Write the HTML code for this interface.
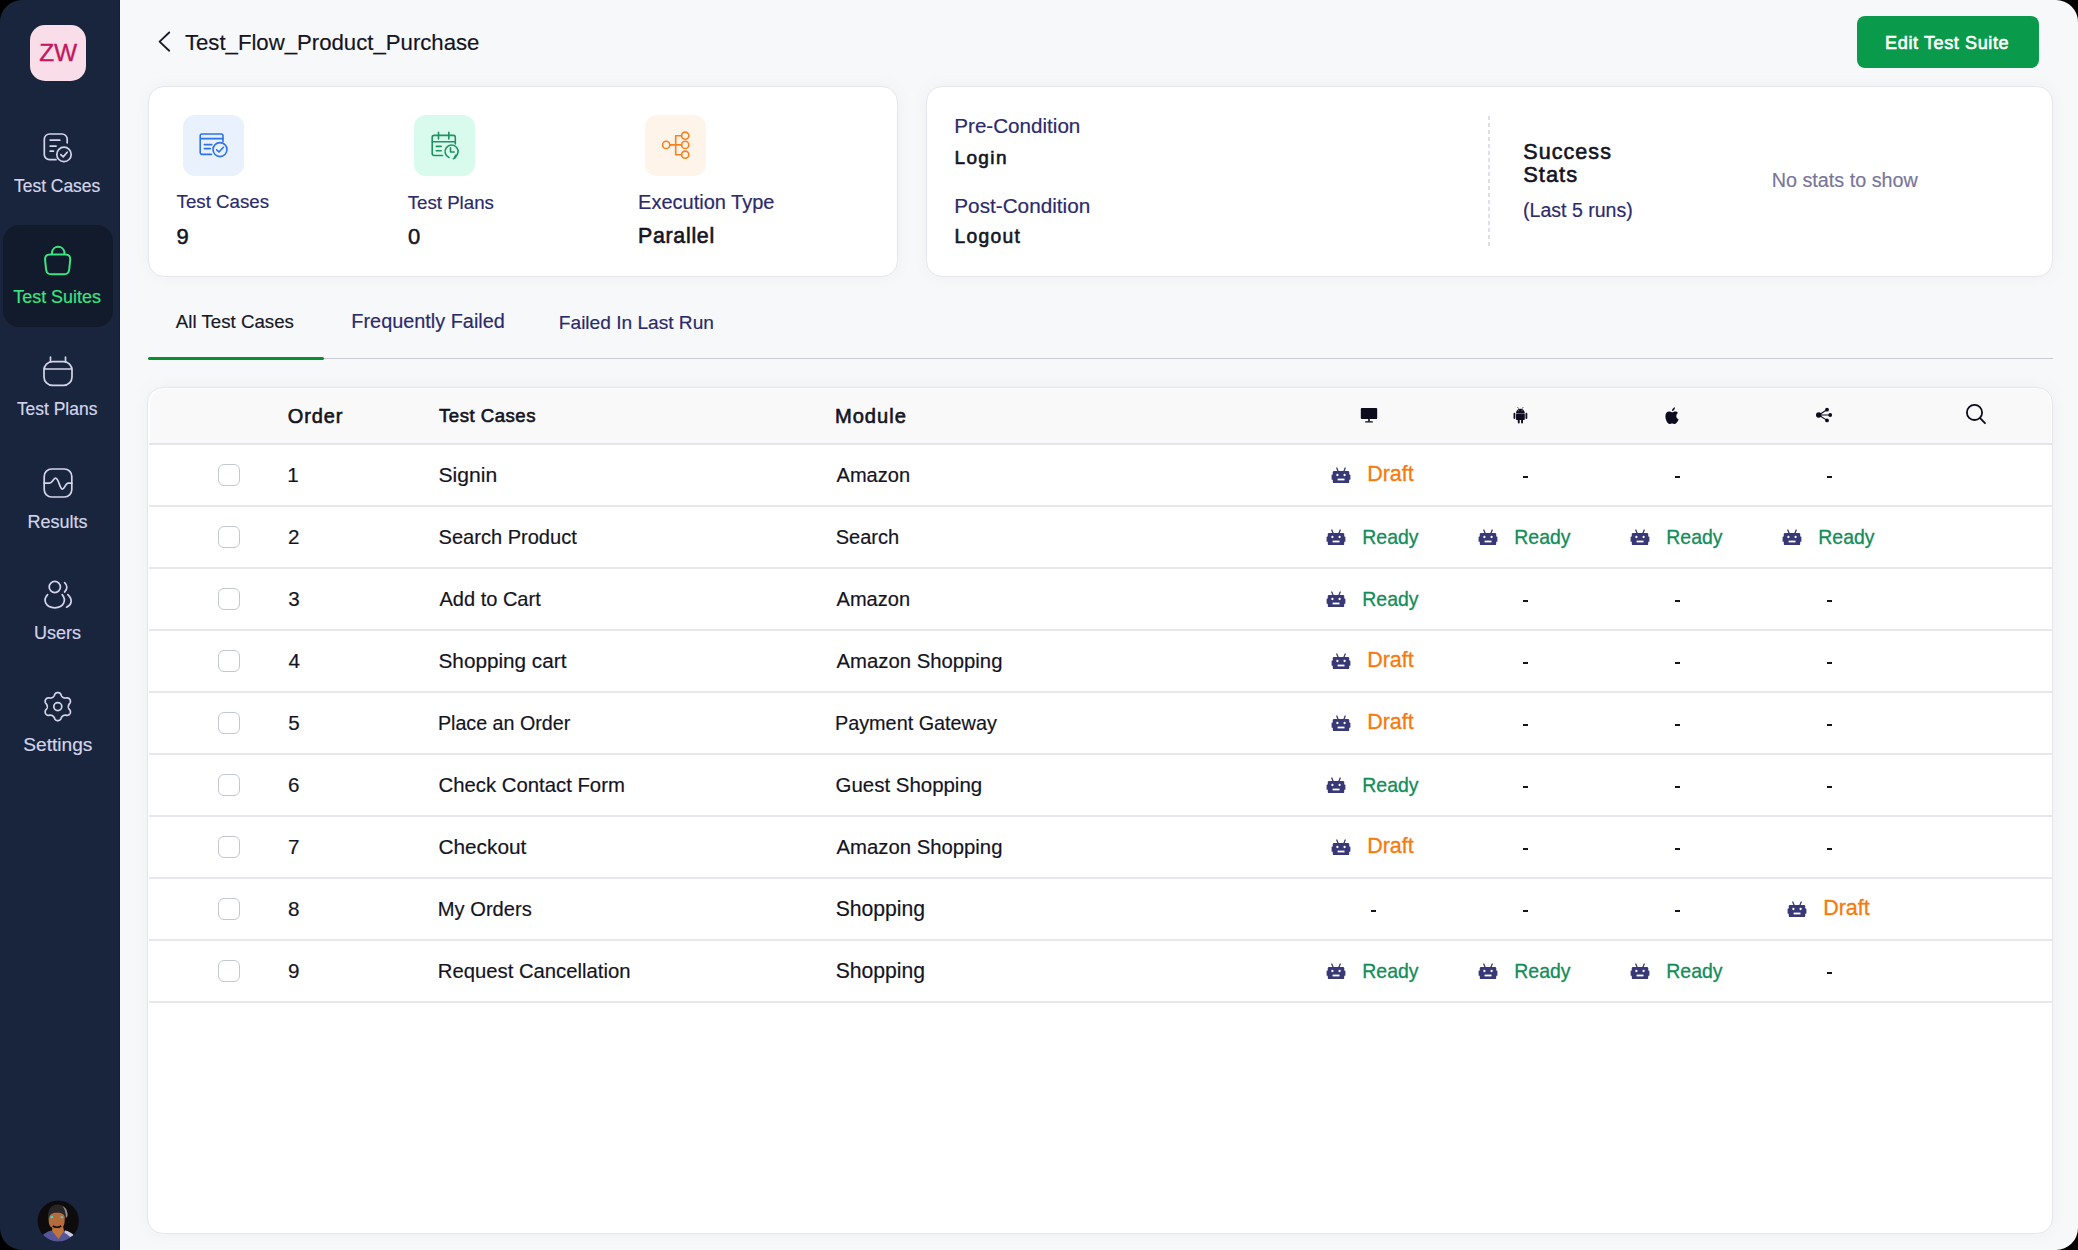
<!DOCTYPE html>
<html><head><meta charset="utf-8"><title>Test Suite</title>
<style>
html,body{margin:0;padding:0;background:#000;}
#screen{position:relative;width:2078px;height:1250px;overflow:hidden;background:#f7f8fa;font-family:"Liberation Sans",sans-serif;}
.t{position:absolute;white-space:nowrap;line-height:1;}
.abs{position:absolute;}
#side{position:absolute;left:0;top:0;width:120px;height:1250px;background:#18253c;box-shadow:inset -1px 0 0 #142036;}
#active{position:absolute;left:3px;top:225px;width:110px;height:102px;border-radius:16px;background:#111b2c;}
#logo{position:absolute;left:30px;top:25px;width:56px;height:56px;border-radius:15px;background:#f9dde8;color:#c2195d;font-size:24.5px;line-height:56px;text-align:center;letter-spacing:-0.3px;-webkit-text-stroke:0.35px #c2195d;}
#btn{position:absolute;left:1857px;top:16px;width:182px;height:52px;border-radius:8px;background:#0a9a4b;}
.card{position:absolute;box-sizing:border-box;background:#fff;border:1.5px solid #e6e7ed;border-radius:16px;box-shadow:0 0 18px rgba(20,25,60,0.04);}
.ibox{position:absolute;width:60.4px;height:60.4px;border-radius:12px;}
.cb{position:absolute;box-sizing:border-box;width:22px;height:22px;border:1.5px solid #c3c7d0;border-radius:6px;background:#fff;}
</style></head>
<body><div id="screen">
<div id="side"></div>
<div id="active"></div>
<div id="logo">ZW</div>
<div class="t" style="left:14.01px;top:178.03px;font-size:17.45px;-webkit-text-stroke:0.18px #d4d5ea;color:#d4d5ea;">Test Cases</div>
<div class="t" style="left:13.30px;top:288.93px;font-size:17.92px;-webkit-text-stroke:0.18px #3be681;color:#3be681;">Test Suites</div>
<div class="t" style="left:16.91px;top:401.13px;font-size:17.45px;-webkit-text-stroke:0.18px #d4d5ea;color:#d4d5ea;">Test Plans</div>
<div class="t" style="left:27.52px;top:512.53px;font-size:18.03px;-webkit-text-stroke:0.18px #d4d5ea;color:#d4d5ea;">Results</div>
<div class="t" style="left:34.11px;top:624.35px;font-size:18.01px;-webkit-text-stroke:0.18px #d4d5ea;color:#d4d5ea;">Users</div>
<div class="t" style="left:23.33px;top:734.70px;font-size:19.14px;-webkit-text-stroke:0.18px #d4d5ea;color:#d4d5ea;">Settings</div>
<svg class="abs" style="left:0;top:0" width="120" height="800" fill="none" stroke="#d4d5ea" stroke-width="1.7" stroke-linecap="round" stroke-linejoin="round">
 <!-- test cases: doc + check -->
 <path d="M56 159.7 H49.5 A5.2 5.2 0 0 1 44.3 154.5 V139.2 A5.2 5.2 0 0 1 49.5 134 H62 A5.2 5.2 0 0 1 67.2 139.2 V142.8"/>
 <path d="M50.2 140.2 H59.8 M50.2 146.1 H56.1 M50.2 151.2 H53.4"/>
 <circle cx="64" cy="154.4" r="7.2"/>
 <path d="M60.8 154.6 L63.2 156.9 L67.2 152.2"/>
 <!-- test plans: calendar -->
 <rect x="44" y="361.6" width="28" height="23.8" rx="8.5"/>
 <path d="M44.2 369 H71.8 M50.5 357 V361.6 M65.5 357 V361.6"/>
 <!-- results -->
 <rect x="44.2" y="469" width="27.6" height="28" rx="7.5"/>
 <path d="M44.2 483.2 H49.5 C52.5 483.2 53.2 478.2 55.6 478.2 C58.5 478.2 60 489.2 62.4 489.2 C64.5 489.2 65.3 483.2 68.3 483.2 H71.8"/>
 <!-- users -->
 <circle cx="54.8" cy="587" r="5.6"/>
 <path d="M47.6 594.6 C42.5 600 45.5 607.8 54.8 607.8 C64.1 607.8 66.6 600 62.2 594.6"/>
 <path d="M64.6 582.6 C67.6 585.2 67.6 589.4 64.6 592"/>
 <path d="M67.8 594.6 C72.5 598.6 72.4 604.6 66.6 607.2"/>
 <!-- settings gear -->
 <circle cx="57.8" cy="706.6" r="4.0"/>
</svg>
<svg class="abs" style="left:0;top:0" width="120" height="800" fill="none" stroke="#d4d5ea" stroke-width="1.7" stroke-linejoin="round"><path d="M57.80 692.55 L58.17 692.57 L58.53 692.63 L58.89 692.73 L59.24 692.87 L59.58 693.04 L59.91 693.26 L60.22 693.52 L60.52 693.82 L60.78 694.18 L60.98 694.72 L61.16 695.26 L61.36 695.63 L61.57 695.95 L61.78 696.24 L61.98 696.50 L62.19 696.74 L62.40 696.96 L62.62 697.15 L62.84 697.32 L63.07 697.46 L63.32 697.59 L63.58 697.70 L63.85 697.79 L64.14 697.87 L64.45 697.93 L64.78 697.98 L65.13 698.01 L65.52 698.03 L65.94 698.02 L66.50 697.90 L67.07 697.80 L67.51 697.86 L67.92 697.96 L68.30 698.10 L68.65 698.28 L68.97 698.48 L69.27 698.72 L69.53 698.98 L69.77 699.27 L69.97 699.58 L70.13 699.90 L70.26 700.25 L70.36 700.61 L70.41 700.98 L70.43 701.37 L70.41 701.76 L70.34 702.16 L70.23 702.56 L70.05 702.97 L69.68 703.42 L69.30 703.84 L69.08 704.20 L68.90 704.54 L68.76 704.86 L68.63 705.17 L68.53 705.47 L68.45 705.76 L68.40 706.04 L68.36 706.32 L68.35 706.60 L68.36 706.88 L68.40 707.16 L68.45 707.44 L68.53 707.73 L68.63 708.03 L68.76 708.34 L68.90 708.66 L69.08 709.00 L69.30 709.36 L69.68 709.78 L70.05 710.23 L70.23 710.64 L70.34 711.04 L70.41 711.44 L70.43 711.83 L70.41 712.22 L70.36 712.59 L70.26 712.95 L70.13 713.30 L69.97 713.62 L69.77 713.93 L69.53 714.22 L69.27 714.48 L68.97 714.72 L68.65 714.92 L68.30 715.10 L67.92 715.24 L67.51 715.34 L67.07 715.40 L66.50 715.30 L65.94 715.18 L65.52 715.17 L65.13 715.19 L64.78 715.22 L64.45 715.27 L64.14 715.33 L63.85 715.41 L63.58 715.50 L63.32 715.61 L63.07 715.74 L62.84 715.88 L62.62 716.05 L62.40 716.24 L62.19 716.46 L61.98 716.70 L61.78 716.96 L61.57 717.25 L61.36 717.57 L61.16 717.94 L60.98 718.48 L60.78 719.02 L60.52 719.38 L60.22 719.68 L59.91 719.94 L59.58 720.16 L59.24 720.33 L58.89 720.47 L58.53 720.57 L58.17 720.63 L57.80 720.65 L57.43 720.63 L57.07 720.57 L56.71 720.47 L56.36 720.33 L56.02 720.16 L55.69 719.94 L55.38 719.68 L55.08 719.38 L54.82 719.02 L54.62 718.48 L54.44 717.94 L54.24 717.57 L54.03 717.25 L53.82 716.96 L53.62 716.70 L53.41 716.46 L53.20 716.24 L52.98 716.05 L52.76 715.88 L52.52 715.74 L52.28 715.61 L52.02 715.50 L51.75 715.41 L51.46 715.33 L51.15 715.27 L50.82 715.22 L50.47 715.19 L50.08 715.17 L49.66 715.18 L49.10 715.30 L48.53 715.40 L48.09 715.34 L47.68 715.24 L47.30 715.10 L46.95 714.92 L46.63 714.72 L46.33 714.48 L46.07 714.22 L45.83 713.93 L45.63 713.62 L45.47 713.30 L45.34 712.95 L45.24 712.59 L45.19 712.22 L45.17 711.83 L45.19 711.44 L45.26 711.04 L45.37 710.64 L45.55 710.23 L45.92 709.78 L46.30 709.36 L46.52 709.00 L46.70 708.66 L46.84 708.34 L46.97 708.03 L47.07 707.73 L47.15 707.44 L47.20 707.16 L47.24 706.88 L47.25 706.60 L47.24 706.32 L47.20 706.04 L47.15 705.76 L47.07 705.47 L46.97 705.17 L46.84 704.86 L46.70 704.54 L46.52 704.20 L46.30 703.84 L45.92 703.42 L45.55 702.97 L45.37 702.56 L45.26 702.16 L45.19 701.76 L45.17 701.37 L45.19 700.98 L45.24 700.61 L45.34 700.25 L45.47 699.90 L45.63 699.58 L45.83 699.27 L46.07 698.98 L46.33 698.72 L46.63 698.48 L46.95 698.28 L47.30 698.10 L47.68 697.96 L48.09 697.86 L48.53 697.80 L49.10 697.90 L49.66 698.02 L50.08 698.03 L50.47 698.01 L50.82 697.98 L51.15 697.93 L51.46 697.87 L51.75 697.79 L52.02 697.70 L52.28 697.59 L52.52 697.46 L52.76 697.32 L52.98 697.15 L53.20 696.96 L53.41 696.74 L53.62 696.50 L53.82 696.24 L54.03 695.95 L54.24 695.63 L54.44 695.26 L54.62 694.72 L54.82 694.18 L55.08 693.82 L55.38 693.52 L55.69 693.26 L56.02 693.04 L56.36 692.87 L56.71 692.73 L57.07 692.63 L57.43 692.57 L57.80 692.55Z"/></svg>
<svg class="abs" style="left:0;top:0" width="120" height="300" fill="none" stroke="#3be681" stroke-width="2" stroke-linecap="round" stroke-linejoin="round">
 <path d="M52 254 V252 A6.3 6.3 0 0 1 64.4 252 V254"/>
 <path d="M50 254.5 H65.3 C69 254.5 70.5 256.5 70.2 260 L69.2 269.5 C68.9 272.5 67 274.3 64 274.3 H51.3 C48.3 274.3 46.4 272.5 46.1 269.5 L45.1 260 C44.8 256.5 46.3 254.5 50 254.5 Z"/>
</svg>
<svg class="abs" style="left:37px;top:1200px" width="42" height="42" viewBox="0 0 42 42">
 <defs><clipPath id="avc"><circle cx="21.2" cy="21" r="20.6"/></clipPath></defs>
 <g clip-path="url(#avc)">
  <rect width="42" height="42" fill="#0e0b0c"/>
  <path d="M2 42 C4 35 8 32.5 14 30.5 L21 34 L28 30.5 C34 32.5 38 35 40 42 Z" fill="#55559a"/>
  <path d="M28 30.5 C32 31.5 35 33 37 35.5 L33 37 C31 35 29.5 33.5 27.5 33 Z" fill="#c9c9e0"/>
  <path d="M15.5 26 L26 26 L27 31 L21.5 39 L15 31 Z" fill="#c0733c"/>
  <path d="M11.4 16.5 C11.4 13 14.5 12 19.5 12 C25 12 27.8 13.5 27.8 17 L27.6 22 C27.4 26.5 24.5 28.8 19.8 28.8 C15 28.8 12 26.5 11.8 22 Z" fill="#b46c3c"/>
  <path d="M11 17 C10.5 9 15 4.5 21 4.6 C27.5 4.8 31 9 30.5 16 L28.5 19 C28 14.5 25.5 12.8 20 12.8 C14.5 12.8 12.5 14.5 12 19 Z" fill="#2a2627"/>
  <path d="M25.5 6 C28.5 7.5 30.8 10.5 30.5 16 L29 18 C29 12.5 27.5 9 25.5 6 Z" fill="#8f8f98"/>
  <rect x="13.4" y="15.9" width="2.6" height="2.2" fill="#3fd6b4"/>
  <rect x="23.6" y="16.2" width="2.4" height="2" fill="#7fb8a8"/>
  <path d="M15.8 26 C18 27.6 22 27.6 24.2 26" stroke="#120c0c" stroke-width="1.6" fill="none"/>
 </g>
</svg>
<svg class="abs" style="left:150px;top:26px" width="30" height="32" fill="none" stroke="#1c1c28" stroke-width="1.9" stroke-linecap="round" stroke-linejoin="round"><path d="M19.2 6.5 L9.6 15.6 L19.2 24.7"/></svg>
<div class="t" style="left:184.90px;top:31.63px;font-size:22.18px;-webkit-text-stroke:0.18px #14141f;color:#14141f;">Test_Flow_Product_Purchase</div>
<div id="btn"></div>
<div class="t" style="left:1885.12px;top:34.11px;font-size:18.06px;color:#fff;-webkit-text-stroke:0.6px #fff;letter-spacing:0.60px;">Edit Test Suite</div>
<div class="card" style="left:147.55px;top:86.25px;width:750.7px;height:190.3px"></div>
<div class="ibox" style="left:183.4px;top:115.3px;background:#e9f1fd"></div>
<div class="ibox" style="left:414.4px;top:115.3px;background:#d8fbee"></div>
<div class="ibox" style="left:645.4px;top:115.3px;background:#fff4ea"></div>
<svg class="abs" style="left:0;top:0" width="900" height="200" fill="none" stroke-linecap="round" stroke-linejoin="round">
 <g stroke="#2f72ea" stroke-width="1.6">
  <path d="M211.5 154.4 H202 A1.8 1.8 0 0 1 200.2 152.6 V135.8 A1.8 1.8 0 0 1 202 134 H221.2 A1.8 1.8 0 0 1 223 135.8 V141.5"/>
  <path d="M200.6 138.6 H222.6 M204.3 144.6 H211.8 M204.3 148.6 H210.3"/>
  <circle cx="220" cy="149.6" r="7"/>
  <path d="M216.7 149.8 L219 152 L223.4 147.3"/>
 </g>
 <g stroke="#1f9262" stroke-width="1.6">
  <path d="M442.5 155.5 H434.2 A2 2 0 0 1 432.2 153.5 V137.4 A2 2 0 0 1 434.2 135.4 H453.3 A2 2 0 0 1 455.3 137.4 V144"/>
  <path d="M432.4 141.8 H455 M438.5 132.4 V139 M448.8 132.4 V139 M436.3 146.4 H441.2 M436.3 150.7 H441.2"/>
  <path d="M449 157.5 A6.5 6.5 0 1 1 454.5 157.3"/>
  <path d="M450.5 147.8 V152 H454.2"/>
  <path d="M453.2 158.8 L455.6 157.6 L455.4 155.2" stroke-width="1.4"/>
 </g>
 <g stroke="#f5821f" stroke-width="1.6">
  <circle cx="666.2" cy="144.9" r="3.6"/>
  <circle cx="685.2" cy="135.7" r="3.6"/>
  <circle cx="685.2" cy="144.9" r="3.6"/>
  <circle cx="685.2" cy="154.7" r="3.6"/>
  <path d="M669.8 144.9 H681.6 M681.6 135.7 H675.7 V154.7 H681.6"/>
 </g>
</svg>
<div class="t" style="left:176.58px;top:193.37px;font-size:18.71px;-webkit-text-stroke:0.18px #2b2a6b;color:#2b2a6b;">Test Cases</div>
<div class="t" style="left:407.68px;top:193.58px;font-size:18.69px;-webkit-text-stroke:0.18px #2b2a6b;color:#2b2a6b;">Test Plans</div>
<div class="t" style="left:638.06px;top:192.47px;font-size:20.00px;-webkit-text-stroke:0.18px #2b2a6b;color:#2b2a6b;">Execution Type</div>
<div class="t" style="left:176.57px;top:225.68px;font-size:22.00px;color:#14141f;-webkit-text-stroke:0.5px #14141f;">9</div>
<div class="t" style="left:407.94px;top:225.68px;font-size:22.00px;color:#14141f;-webkit-text-stroke:0.5px #14141f;">0</div>
<div class="t" style="left:637.95px;top:226.01px;font-size:21.37px;color:#14141f;-webkit-text-stroke:0.6px #14141f;letter-spacing:0.72px;">Parallel</div>
<div class="card" style="left:925.75px;top:86.25px;width:1127px;height:190.3px"></div>
<div class="t" style="left:954.31px;top:116.15px;font-size:20.61px;-webkit-text-stroke:0.18px #2b2a6b;color:#2b2a6b;">Pre-Condition</div>
<div class="t" style="left:954.44px;top:147.90px;font-size:19.02px;color:#14141f;-webkit-text-stroke:0.6px #14141f;letter-spacing:1.39px;">Login</div>
<div class="t" style="left:954.30px;top:195.56px;font-size:20.73px;-webkit-text-stroke:0.18px #2b2a6b;color:#2b2a6b;">Post-Condition</div>
<div class="t" style="left:954.42px;top:227.47px;font-size:19.29px;color:#14141f;-webkit-text-stroke:0.6px #14141f;letter-spacing:1.31px;">Logout</div>
<div class="abs" style="left:1487.5px;top:115.5px;width:2px;height:132px;background:repeating-linear-gradient(to bottom,#dfe0e7 0 4px,transparent 4px 7px)"></div>
<div class="t" style="left:1523.32px;top:141.97px;font-size:21.54px;color:#14141f;-webkit-text-stroke:0.6px #14141f;letter-spacing:1.04px;">Success</div>
<div class="t" style="left:1523.31px;top:163.87px;font-size:21.89px;color:#14141f;-webkit-text-stroke:0.6px #14141f;letter-spacing:0.98px;">Stats</div>
<div class="t" style="left:1523.09px;top:200.55px;font-size:19.55px;-webkit-text-stroke:0.18px #2b2a6b;color:#2b2a6b;">(Last 5 runs)</div>
<div class="t" style="left:1771.68px;top:171.16px;font-size:19.77px;-webkit-text-stroke:0.18px #77769a;color:#77769a;">No stats to show</div>
<div class="t" style="left:175.86px;top:313.36px;font-size:18.71px;-webkit-text-stroke:0.18px #181824;color:#181824;">All Test Cases</div>
<div class="t" style="left:351.37px;top:312.39px;font-size:19.86px;-webkit-text-stroke:0.18px #2b2a6b;color:#2b2a6b;">Frequently Failed</div>
<div class="t" style="left:558.83px;top:313.02px;font-size:19.11px;-webkit-text-stroke:0.18px #2b2a6b;color:#2b2a6b;">Failed In Last Run</div>
<div class="abs" style="left:148px;top:357.6px;width:1905px;height:1.6px;background:#c9cbd3"></div>
<div class="abs" style="left:148px;top:356.5px;width:176px;height:3px;border-radius:2px;background:#098f30"></div>
<div class="card" id="tbl" style="left:147.35px;top:386.75px;width:1905.6px;height:847.5px"></div>
<div class="abs" style="left:149.5px;top:389px;width:1901.5px;height:54px;background:#f9f9fa;border-radius:15px 15px 0 0"></div>
<div class="abs" style="left:148.5px;top:443px;width:1903.5px;height:2px;background:#e5e6eb"></div>
<div class="t" style="left:287.75px;top:406.08px;font-size:19.99px;color:#14141f;-webkit-text-stroke:0.6px #14141f;letter-spacing:0.87px;">Order</div>
<div class="t" style="left:439.08px;top:407.25px;font-size:18.61px;color:#14141f;-webkit-text-stroke:0.6px #14141f;letter-spacing:0.48px;">Test Cases</div>
<div class="t" style="left:834.95px;top:405.96px;font-size:20.13px;color:#14141f;-webkit-text-stroke:0.6px #14141f;letter-spacing:0.99px;">Module</div>
<svg class="abs" style="left:1300px;top:395px" width="720" height="40">
 <g fill="#0c0c1e">
  <rect x="60.8" y="13" width="16.4" height="11" rx="1"/>
  <rect x="68.2" y="23.5" width="1.6" height="3"/>
  <rect x="65" y="26.2" width="8" height="1.4" rx="0.7"/>
 </g>
 <g fill="#0c0c1e">
  <path d="M216 18.2 A4.4 4.4 0 0 1 224.8 18.2 Z"/>
  <rect x="216" y="18.6" width="8.8" height="6.4" rx="0.8"/>
  <rect x="213.5" y="17.8" width="1.8" height="6.2" rx="0.9"/>
  <rect x="225.5" y="17.8" width="1.8" height="6.2" rx="0.9"/>
  <rect x="217.8" y="24" width="1.9" height="4.5" rx="0.9"/>
  <rect x="221.1" y="24" width="1.9" height="4.5" rx="0.9"/>
  <path d="M217.5 12 L218.7 13.8 M223.3 12 L222.1 13.8" stroke="#0c0c1e" stroke-width="0.6"/>
 </g>
 <circle cx="218.8" cy="15.7" r="0.45" fill="#fff"/><circle cx="222" cy="15.7" r="0.45" fill="#fff"/>
 <g fill="#0c0c1e">
  <g transform="translate(365.4 12)">
  <path d="M6.6 4.1 C6.5 2.2 7.8 0.6 9.6 0.2 C9.7 2.1 8.4 3.8 6.6 4.1 Z"/>
  <path d="M6.6 5.3 C5.6 5.3 4.8 4.6 3.6 4.6 C1.6 4.6 0 6.4 0 9.2 C0 12.6 2.2 17 4.1 17 C5.1 17 5.6 16.4 6.7 16.4 C7.8 16.4 8.2 17 9.3 17 C11 17 12.5 14.3 13.2 12.6 C11.6 11.9 10.9 10.6 10.9 9.1 C10.9 7.8 11.6 6.6 12.6 5.9 C11.9 5 10.8 4.5 9.7 4.5 C8.5 4.5 7.6 5.3 6.6 5.3 Z"/>
  </g>
 </g>
 <g fill="#0c0c1e" stroke="#0c0c1e">
  <path d="M518.7 20 L527 14.7 M518.7 20 H530.2 M518.7 20 L527 25.4" stroke-width="1.1"/>
  <circle cx="518.7" cy="20" r="2.7" stroke="none"/>
  <circle cx="527" cy="14.7" r="1.9" stroke="none"/>
  <circle cx="530.2" cy="20" r="1.9" stroke="none"/>
  <circle cx="527" cy="25.4" r="1.9" stroke="none"/>
 </g>
 <g fill="none" stroke="#0c0c1e" stroke-width="1.8" stroke-linecap="round">
  <circle cx="674.5" cy="17.4" r="7.6"/>
  <path d="M680.3 23.4 L685 28.2"/>
 </g>
</svg>
<div class="abs" style="left:148.5px;top:505.0px;width:1903.5px;height:2px;background:#e7e7ed"></div>
<div class="cb" style="left:218px;top:464.3px"></div>
<div class="t" style="left:287.13px;top:464.86px;font-size:20.60px;-webkit-text-stroke:0.18px #14141f;color:#14141f;">1</div>
<div class="t" style="left:438.54px;top:464.45px;font-size:21.09px;-webkit-text-stroke:0.18px #14141f;color:#14141f;">Signin</div>
<div class="t" style="left:836.56px;top:465.33px;font-size:20.05px;-webkit-text-stroke:0.18px #14141f;color:#14141f;">Amazon</div>
<svg class="abs" style="left:1330.60px;top:467.10px" width="20" height="17" viewBox="0 0 20 17">
<path d="M5.8 1 L7.2 4.4 M14.2 1 L12.8 4.4" stroke="#393877" stroke-width="1.3" stroke-linecap="round"/>
<rect x="1.8" y="4" width="16.4" height="12.1" rx="1.2" fill="#393877"/>
<rect x="0.6" y="7.4" width="18.8" height="5.4" rx="0.6" fill="#393877"/>
<circle cx="6.4" cy="8" r="1.15" fill="#fff"/><circle cx="13.6" cy="8" r="1.15" fill="#fff"/>
<rect x="6.6" y="11.6" width="6.9" height="1.8" fill="#fff"/>
</svg>
<div class="t" style="left:1367.14px;top:464.13px;font-size:21.47px;color:#f47b10;-webkit-text-stroke:0.3px #f47b10;">Draft</div>
<div class="abs" style="left:1522.8px;top:475.5px;width:5.6px;height:2px;background:#15151f"></div>
<div class="abs" style="left:1674.8px;top:475.5px;width:5.6px;height:2px;background:#15151f"></div>
<div class="abs" style="left:1826.8px;top:475.5px;width:5.6px;height:2px;background:#15151f"></div>
<div class="abs" style="left:148.5px;top:567.0px;width:1903.5px;height:2px;background:#e7e7ed"></div>
<div class="cb" style="left:218px;top:526.3px"></div>
<div class="t" style="left:287.96px;top:526.86px;font-size:20.60px;-webkit-text-stroke:0.18px #14141f;color:#14141f;">2</div>
<div class="t" style="left:438.59px;top:527.32px;font-size:20.06px;-webkit-text-stroke:0.18px #14141f;color:#14141f;">Search Product</div>
<div class="t" style="left:835.69px;top:527.36px;font-size:20.01px;-webkit-text-stroke:0.18px #14141f;color:#14141f;">Search</div>
<svg class="abs" style="left:1325.60px;top:529.10px" width="20" height="17" viewBox="0 0 20 17">
<path d="M5.8 1 L7.2 4.4 M14.2 1 L12.8 4.4" stroke="#393877" stroke-width="1.3" stroke-linecap="round"/>
<rect x="1.8" y="4" width="16.4" height="12.1" rx="1.2" fill="#393877"/>
<rect x="0.6" y="7.4" width="18.8" height="5.4" rx="0.6" fill="#393877"/>
<circle cx="6.4" cy="8" r="1.15" fill="#fff"/><circle cx="13.6" cy="8" r="1.15" fill="#fff"/>
<rect x="6.6" y="11.6" width="6.9" height="1.8" fill="#fff"/>
</svg>
<div class="t" style="left:1362.30px;top:527.83px;font-size:19.45px;color:#128d59;-webkit-text-stroke:0.3px #128d59;">Ready</div>
<svg class="abs" style="left:1477.60px;top:529.10px" width="20" height="17" viewBox="0 0 20 17">
<path d="M5.8 1 L7.2 4.4 M14.2 1 L12.8 4.4" stroke="#393877" stroke-width="1.3" stroke-linecap="round"/>
<rect x="1.8" y="4" width="16.4" height="12.1" rx="1.2" fill="#393877"/>
<rect x="0.6" y="7.4" width="18.8" height="5.4" rx="0.6" fill="#393877"/>
<circle cx="6.4" cy="8" r="1.15" fill="#fff"/><circle cx="13.6" cy="8" r="1.15" fill="#fff"/>
<rect x="6.6" y="11.6" width="6.9" height="1.8" fill="#fff"/>
</svg>
<div class="t" style="left:1514.30px;top:527.83px;font-size:19.45px;color:#128d59;-webkit-text-stroke:0.3px #128d59;">Ready</div>
<svg class="abs" style="left:1629.60px;top:529.10px" width="20" height="17" viewBox="0 0 20 17">
<path d="M5.8 1 L7.2 4.4 M14.2 1 L12.8 4.4" stroke="#393877" stroke-width="1.3" stroke-linecap="round"/>
<rect x="1.8" y="4" width="16.4" height="12.1" rx="1.2" fill="#393877"/>
<rect x="0.6" y="7.4" width="18.8" height="5.4" rx="0.6" fill="#393877"/>
<circle cx="6.4" cy="8" r="1.15" fill="#fff"/><circle cx="13.6" cy="8" r="1.15" fill="#fff"/>
<rect x="6.6" y="11.6" width="6.9" height="1.8" fill="#fff"/>
</svg>
<div class="t" style="left:1666.30px;top:527.83px;font-size:19.45px;color:#128d59;-webkit-text-stroke:0.3px #128d59;">Ready</div>
<svg class="abs" style="left:1781.60px;top:529.10px" width="20" height="17" viewBox="0 0 20 17">
<path d="M5.8 1 L7.2 4.4 M14.2 1 L12.8 4.4" stroke="#393877" stroke-width="1.3" stroke-linecap="round"/>
<rect x="1.8" y="4" width="16.4" height="12.1" rx="1.2" fill="#393877"/>
<rect x="0.6" y="7.4" width="18.8" height="5.4" rx="0.6" fill="#393877"/>
<circle cx="6.4" cy="8" r="1.15" fill="#fff"/><circle cx="13.6" cy="8" r="1.15" fill="#fff"/>
<rect x="6.6" y="11.6" width="6.9" height="1.8" fill="#fff"/>
</svg>
<div class="t" style="left:1818.30px;top:527.83px;font-size:19.45px;color:#128d59;-webkit-text-stroke:0.3px #128d59;">Ready</div>
<div class="abs" style="left:148.5px;top:629.0px;width:1903.5px;height:2px;background:#e7e7ed"></div>
<div class="cb" style="left:218px;top:588.3px"></div>
<div class="t" style="left:288.22px;top:588.86px;font-size:20.60px;-webkit-text-stroke:0.18px #14141f;color:#14141f;">3</div>
<div class="t" style="left:439.46px;top:589.35px;font-size:20.02px;-webkit-text-stroke:0.18px #14141f;color:#14141f;">Add to Cart</div>
<div class="t" style="left:836.56px;top:589.33px;font-size:20.05px;-webkit-text-stroke:0.18px #14141f;color:#14141f;">Amazon</div>
<svg class="abs" style="left:1325.60px;top:591.10px" width="20" height="17" viewBox="0 0 20 17">
<path d="M5.8 1 L7.2 4.4 M14.2 1 L12.8 4.4" stroke="#393877" stroke-width="1.3" stroke-linecap="round"/>
<rect x="1.8" y="4" width="16.4" height="12.1" rx="1.2" fill="#393877"/>
<rect x="0.6" y="7.4" width="18.8" height="5.4" rx="0.6" fill="#393877"/>
<circle cx="6.4" cy="8" r="1.15" fill="#fff"/><circle cx="13.6" cy="8" r="1.15" fill="#fff"/>
<rect x="6.6" y="11.6" width="6.9" height="1.8" fill="#fff"/>
</svg>
<div class="t" style="left:1362.30px;top:589.83px;font-size:19.45px;color:#128d59;-webkit-text-stroke:0.3px #128d59;">Ready</div>
<div class="abs" style="left:1522.8px;top:599.5px;width:5.6px;height:2px;background:#15151f"></div>
<div class="abs" style="left:1674.8px;top:599.5px;width:5.6px;height:2px;background:#15151f"></div>
<div class="abs" style="left:1826.8px;top:599.5px;width:5.6px;height:2px;background:#15151f"></div>
<div class="abs" style="left:148.5px;top:691.0px;width:1903.5px;height:2px;background:#e7e7ed"></div>
<div class="cb" style="left:218px;top:650.3px"></div>
<div class="t" style="left:288.53px;top:650.86px;font-size:20.60px;-webkit-text-stroke:0.18px #14141f;color:#14141f;">4</div>
<div class="t" style="left:438.56px;top:650.76px;font-size:20.73px;-webkit-text-stroke:0.18px #14141f;color:#14141f;">Shopping cart</div>
<div class="t" style="left:836.56px;top:651.11px;font-size:20.31px;-webkit-text-stroke:0.18px #14141f;color:#14141f;">Amazon Shopping</div>
<svg class="abs" style="left:1330.60px;top:653.10px" width="20" height="17" viewBox="0 0 20 17">
<path d="M5.8 1 L7.2 4.4 M14.2 1 L12.8 4.4" stroke="#393877" stroke-width="1.3" stroke-linecap="round"/>
<rect x="1.8" y="4" width="16.4" height="12.1" rx="1.2" fill="#393877"/>
<rect x="0.6" y="7.4" width="18.8" height="5.4" rx="0.6" fill="#393877"/>
<circle cx="6.4" cy="8" r="1.15" fill="#fff"/><circle cx="13.6" cy="8" r="1.15" fill="#fff"/>
<rect x="6.6" y="11.6" width="6.9" height="1.8" fill="#fff"/>
</svg>
<div class="t" style="left:1367.14px;top:650.13px;font-size:21.47px;color:#f47b10;-webkit-text-stroke:0.3px #f47b10;">Draft</div>
<div class="abs" style="left:1522.8px;top:661.5px;width:5.6px;height:2px;background:#15151f"></div>
<div class="abs" style="left:1674.8px;top:661.5px;width:5.6px;height:2px;background:#15151f"></div>
<div class="abs" style="left:1826.8px;top:661.5px;width:5.6px;height:2px;background:#15151f"></div>
<div class="abs" style="left:148.5px;top:753.0px;width:1903.5px;height:2px;background:#e7e7ed"></div>
<div class="cb" style="left:218px;top:712.3px"></div>
<div class="t" style="left:288.18px;top:712.86px;font-size:20.60px;-webkit-text-stroke:0.18px #14141f;color:#14141f;">5</div>
<div class="t" style="left:437.88px;top:713.63px;font-size:19.69px;-webkit-text-stroke:0.18px #14141f;color:#14141f;">Place an Order</div>
<div class="t" style="left:834.97px;top:713.52px;font-size:19.82px;-webkit-text-stroke:0.18px #14141f;color:#14141f;">Payment Gateway</div>
<svg class="abs" style="left:1330.60px;top:715.10px" width="20" height="17" viewBox="0 0 20 17">
<path d="M5.8 1 L7.2 4.4 M14.2 1 L12.8 4.4" stroke="#393877" stroke-width="1.3" stroke-linecap="round"/>
<rect x="1.8" y="4" width="16.4" height="12.1" rx="1.2" fill="#393877"/>
<rect x="0.6" y="7.4" width="18.8" height="5.4" rx="0.6" fill="#393877"/>
<circle cx="6.4" cy="8" r="1.15" fill="#fff"/><circle cx="13.6" cy="8" r="1.15" fill="#fff"/>
<rect x="6.6" y="11.6" width="6.9" height="1.8" fill="#fff"/>
</svg>
<div class="t" style="left:1367.14px;top:712.13px;font-size:21.47px;color:#f47b10;-webkit-text-stroke:0.3px #f47b10;">Draft</div>
<div class="abs" style="left:1522.8px;top:723.5px;width:5.6px;height:2px;background:#15151f"></div>
<div class="abs" style="left:1674.8px;top:723.5px;width:5.6px;height:2px;background:#15151f"></div>
<div class="abs" style="left:1826.8px;top:723.5px;width:5.6px;height:2px;background:#15151f"></div>
<div class="abs" style="left:148.5px;top:815.0px;width:1903.5px;height:2px;background:#e7e7ed"></div>
<div class="cb" style="left:218px;top:774.3px"></div>
<div class="t" style="left:287.95px;top:774.86px;font-size:20.60px;-webkit-text-stroke:0.18px #14141f;color:#14141f;">6</div>
<div class="t" style="left:438.47px;top:775.09px;font-size:20.33px;-webkit-text-stroke:0.18px #14141f;color:#14141f;">Check Contact Form</div>
<div class="t" style="left:835.57px;top:774.98px;font-size:20.46px;-webkit-text-stroke:0.18px #14141f;color:#14141f;">Guest Shopping</div>
<svg class="abs" style="left:1325.60px;top:777.10px" width="20" height="17" viewBox="0 0 20 17">
<path d="M5.8 1 L7.2 4.4 M14.2 1 L12.8 4.4" stroke="#393877" stroke-width="1.3" stroke-linecap="round"/>
<rect x="1.8" y="4" width="16.4" height="12.1" rx="1.2" fill="#393877"/>
<rect x="0.6" y="7.4" width="18.8" height="5.4" rx="0.6" fill="#393877"/>
<circle cx="6.4" cy="8" r="1.15" fill="#fff"/><circle cx="13.6" cy="8" r="1.15" fill="#fff"/>
<rect x="6.6" y="11.6" width="6.9" height="1.8" fill="#fff"/>
</svg>
<div class="t" style="left:1362.30px;top:775.83px;font-size:19.45px;color:#128d59;-webkit-text-stroke:0.3px #128d59;">Ready</div>
<div class="abs" style="left:1522.8px;top:785.5px;width:5.6px;height:2px;background:#15151f"></div>
<div class="abs" style="left:1674.8px;top:785.5px;width:5.6px;height:2px;background:#15151f"></div>
<div class="abs" style="left:1826.8px;top:785.5px;width:5.6px;height:2px;background:#15151f"></div>
<div class="abs" style="left:148.5px;top:877.0px;width:1903.5px;height:2px;background:#e7e7ed"></div>
<div class="cb" style="left:218px;top:836.3px"></div>
<div class="t" style="left:287.94px;top:836.86px;font-size:20.60px;-webkit-text-stroke:0.18px #14141f;color:#14141f;">7</div>
<div class="t" style="left:438.44px;top:836.69px;font-size:20.81px;-webkit-text-stroke:0.18px #14141f;color:#14141f;">Checkout</div>
<div class="t" style="left:836.56px;top:837.11px;font-size:20.31px;-webkit-text-stroke:0.18px #14141f;color:#14141f;">Amazon Shopping</div>
<svg class="abs" style="left:1330.60px;top:839.10px" width="20" height="17" viewBox="0 0 20 17">
<path d="M5.8 1 L7.2 4.4 M14.2 1 L12.8 4.4" stroke="#393877" stroke-width="1.3" stroke-linecap="round"/>
<rect x="1.8" y="4" width="16.4" height="12.1" rx="1.2" fill="#393877"/>
<rect x="0.6" y="7.4" width="18.8" height="5.4" rx="0.6" fill="#393877"/>
<circle cx="6.4" cy="8" r="1.15" fill="#fff"/><circle cx="13.6" cy="8" r="1.15" fill="#fff"/>
<rect x="6.6" y="11.6" width="6.9" height="1.8" fill="#fff"/>
</svg>
<div class="t" style="left:1367.14px;top:836.13px;font-size:21.47px;color:#f47b10;-webkit-text-stroke:0.3px #f47b10;">Draft</div>
<div class="abs" style="left:1522.8px;top:847.5px;width:5.6px;height:2px;background:#15151f"></div>
<div class="abs" style="left:1674.8px;top:847.5px;width:5.6px;height:2px;background:#15151f"></div>
<div class="abs" style="left:1826.8px;top:847.5px;width:5.6px;height:2px;background:#15151f"></div>
<div class="abs" style="left:148.5px;top:939.0px;width:1903.5px;height:2px;background:#e7e7ed"></div>
<div class="cb" style="left:218px;top:898.3px"></div>
<div class="t" style="left:288.10px;top:898.86px;font-size:20.60px;-webkit-text-stroke:0.18px #14141f;color:#14141f;">8</div>
<div class="t" style="left:437.85px;top:899.27px;font-size:20.12px;-webkit-text-stroke:0.18px #14141f;color:#14141f;">My Orders</div>
<div class="t" style="left:835.64px;top:898.37px;font-size:21.18px;-webkit-text-stroke:0.18px #14141f;color:#14141f;">Shopping</div>
<div class="abs" style="left:1370.8px;top:909.5px;width:5.6px;height:2px;background:#15151f"></div>
<div class="abs" style="left:1522.8px;top:909.5px;width:5.6px;height:2px;background:#15151f"></div>
<div class="abs" style="left:1674.8px;top:909.5px;width:5.6px;height:2px;background:#15151f"></div>
<svg class="abs" style="left:1786.60px;top:901.10px" width="20" height="17" viewBox="0 0 20 17">
<path d="M5.8 1 L7.2 4.4 M14.2 1 L12.8 4.4" stroke="#393877" stroke-width="1.3" stroke-linecap="round"/>
<rect x="1.8" y="4" width="16.4" height="12.1" rx="1.2" fill="#393877"/>
<rect x="0.6" y="7.4" width="18.8" height="5.4" rx="0.6" fill="#393877"/>
<circle cx="6.4" cy="8" r="1.15" fill="#fff"/><circle cx="13.6" cy="8" r="1.15" fill="#fff"/>
<rect x="6.6" y="11.6" width="6.9" height="1.8" fill="#fff"/>
</svg>
<div class="t" style="left:1823.14px;top:898.13px;font-size:21.47px;color:#f47b10;-webkit-text-stroke:0.3px #f47b10;">Draft</div>
<div class="abs" style="left:148.5px;top:1001.0px;width:1903.5px;height:2px;background:#e7e7ed"></div>
<div class="cb" style="left:218px;top:960.3px"></div>
<div class="t" style="left:288.03px;top:960.86px;font-size:20.60px;-webkit-text-stroke:0.18px #14141f;color:#14141f;">9</div>
<div class="t" style="left:437.84px;top:961.14px;font-size:20.27px;-webkit-text-stroke:0.18px #14141f;color:#14141f;">Request Cancellation</div>
<div class="t" style="left:835.64px;top:960.37px;font-size:21.18px;-webkit-text-stroke:0.18px #14141f;color:#14141f;">Shopping</div>
<svg class="abs" style="left:1325.60px;top:963.10px" width="20" height="17" viewBox="0 0 20 17">
<path d="M5.8 1 L7.2 4.4 M14.2 1 L12.8 4.4" stroke="#393877" stroke-width="1.3" stroke-linecap="round"/>
<rect x="1.8" y="4" width="16.4" height="12.1" rx="1.2" fill="#393877"/>
<rect x="0.6" y="7.4" width="18.8" height="5.4" rx="0.6" fill="#393877"/>
<circle cx="6.4" cy="8" r="1.15" fill="#fff"/><circle cx="13.6" cy="8" r="1.15" fill="#fff"/>
<rect x="6.6" y="11.6" width="6.9" height="1.8" fill="#fff"/>
</svg>
<div class="t" style="left:1362.30px;top:961.83px;font-size:19.45px;color:#128d59;-webkit-text-stroke:0.3px #128d59;">Ready</div>
<svg class="abs" style="left:1477.60px;top:963.10px" width="20" height="17" viewBox="0 0 20 17">
<path d="M5.8 1 L7.2 4.4 M14.2 1 L12.8 4.4" stroke="#393877" stroke-width="1.3" stroke-linecap="round"/>
<rect x="1.8" y="4" width="16.4" height="12.1" rx="1.2" fill="#393877"/>
<rect x="0.6" y="7.4" width="18.8" height="5.4" rx="0.6" fill="#393877"/>
<circle cx="6.4" cy="8" r="1.15" fill="#fff"/><circle cx="13.6" cy="8" r="1.15" fill="#fff"/>
<rect x="6.6" y="11.6" width="6.9" height="1.8" fill="#fff"/>
</svg>
<div class="t" style="left:1514.30px;top:961.83px;font-size:19.45px;color:#128d59;-webkit-text-stroke:0.3px #128d59;">Ready</div>
<svg class="abs" style="left:1629.60px;top:963.10px" width="20" height="17" viewBox="0 0 20 17">
<path d="M5.8 1 L7.2 4.4 M14.2 1 L12.8 4.4" stroke="#393877" stroke-width="1.3" stroke-linecap="round"/>
<rect x="1.8" y="4" width="16.4" height="12.1" rx="1.2" fill="#393877"/>
<rect x="0.6" y="7.4" width="18.8" height="5.4" rx="0.6" fill="#393877"/>
<circle cx="6.4" cy="8" r="1.15" fill="#fff"/><circle cx="13.6" cy="8" r="1.15" fill="#fff"/>
<rect x="6.6" y="11.6" width="6.9" height="1.8" fill="#fff"/>
</svg>
<div class="t" style="left:1666.30px;top:961.83px;font-size:19.45px;color:#128d59;-webkit-text-stroke:0.3px #128d59;">Ready</div>
<div class="abs" style="left:1826.8px;top:971.5px;width:5.6px;height:2px;background:#15151f"></div>
<svg class="abs" style="left:0;top:0" width="2078" height="1250" fill="#000"><path d="M0 0 H22 A22 22 0 0 0 0 22 Z"/><path d="M2078 0 V22 A22 22 0 0 0 2056 0 Z"/><path d="M0 1250 V1228 A22 22 0 0 0 22 1250 Z"/><path d="M2078 1250 H2056 A22 22 0 0 0 2078 1228 Z"/></svg>
</div></body></html>
